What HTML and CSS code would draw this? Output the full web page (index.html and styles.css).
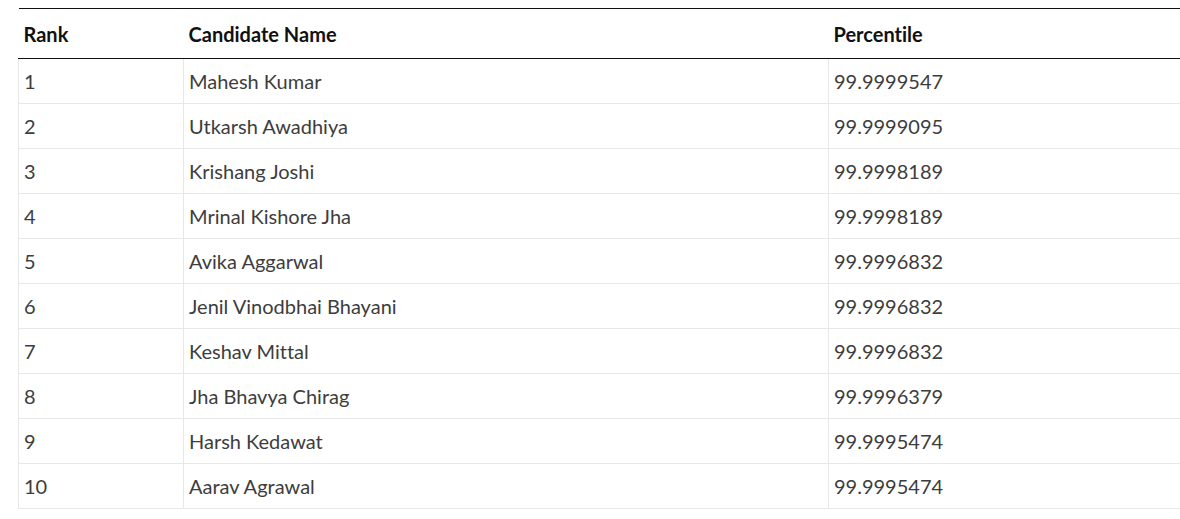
FILE: index.html
```html
<!DOCTYPE html>
<html>
<head>
<meta charset="utf-8">
<link rel="stylesheet" href="styles.css">
</head>
<body>
<div class="wrap">
<table class="rank-table">
  <colgroup>
    <col class="c-rank">
    <col class="c-name">
    <col class="c-pct">
  </colgroup>
  <thead>
    <tr><th>Rank</th><th>Candidate Name</th><th>Percentile</th></tr>
  </thead>
  <tbody>
    <tr><td>1</td><td>Mahesh Kumar</td><td>99.9999547</td></tr>
    <tr><td>2</td><td>Utkarsh Awadhiya</td><td>99.9999095</td></tr>
    <tr><td>3</td><td>Krishang Joshi</td><td>99.9998189</td></tr>
    <tr><td>4</td><td>Mrinal Kishore Jha</td><td>99.9998189</td></tr>
    <tr><td>5</td><td>Avika Aggarwal</td><td>99.9996832</td></tr>
    <tr><td>6</td><td>Jenil Vinodbhai Bhayani</td><td>99.9996832</td></tr>
    <tr><td>7</td><td>Keshav Mittal</td><td>99.9996832</td></tr>
    <tr><td>8</td><td>Jha Bhavya Chirag</td><td>99.9996379</td></tr>
    <tr><td>9</td><td>Harsh Kedawat</td><td>99.9995474</td></tr>
    <tr><td>10</td><td>Aarav Agrawal</td><td>99.9995474</td></tr>
  </tbody>
</table>
</div>
</body>
</html>
```
FILE: styles.css
```css
html, body {
  margin: 0;
  padding: 0;
  background: #fff;
}
body {
  font-family: Lato, "Open Sans", sans-serif;
  font-variant-ligatures: none;
  overflow: hidden;
}
.wrap {
  padding: 8px 0 0 18px;
  width: 1180px;
  overflow: hidden;
  box-sizing: border-box;
}
.rank-table {
  border-collapse: collapse;
  width: 1170px;
  table-layout: fixed;
}
.c-rank { width: 165px; }
.c-name { width: 645px; }
.c-pct { width: 360px; }
.rank-table th {
  text-align: left;
  font-weight: 700;
  font-size: 20px;
  color: #111;
  height: 49px;
  padding: 0 0 0 5px;
  border-top: 1px solid #111;
  border-bottom: 1px solid #111;
  vertical-align: middle;
}
.rank-table td {
  font-size: 20px;
  color: #3d3d3d;
  height: 44px;
  padding: 0 0 0 5px;
  border: 1px solid #e8e8e8;
  vertical-align: middle;
}
```
